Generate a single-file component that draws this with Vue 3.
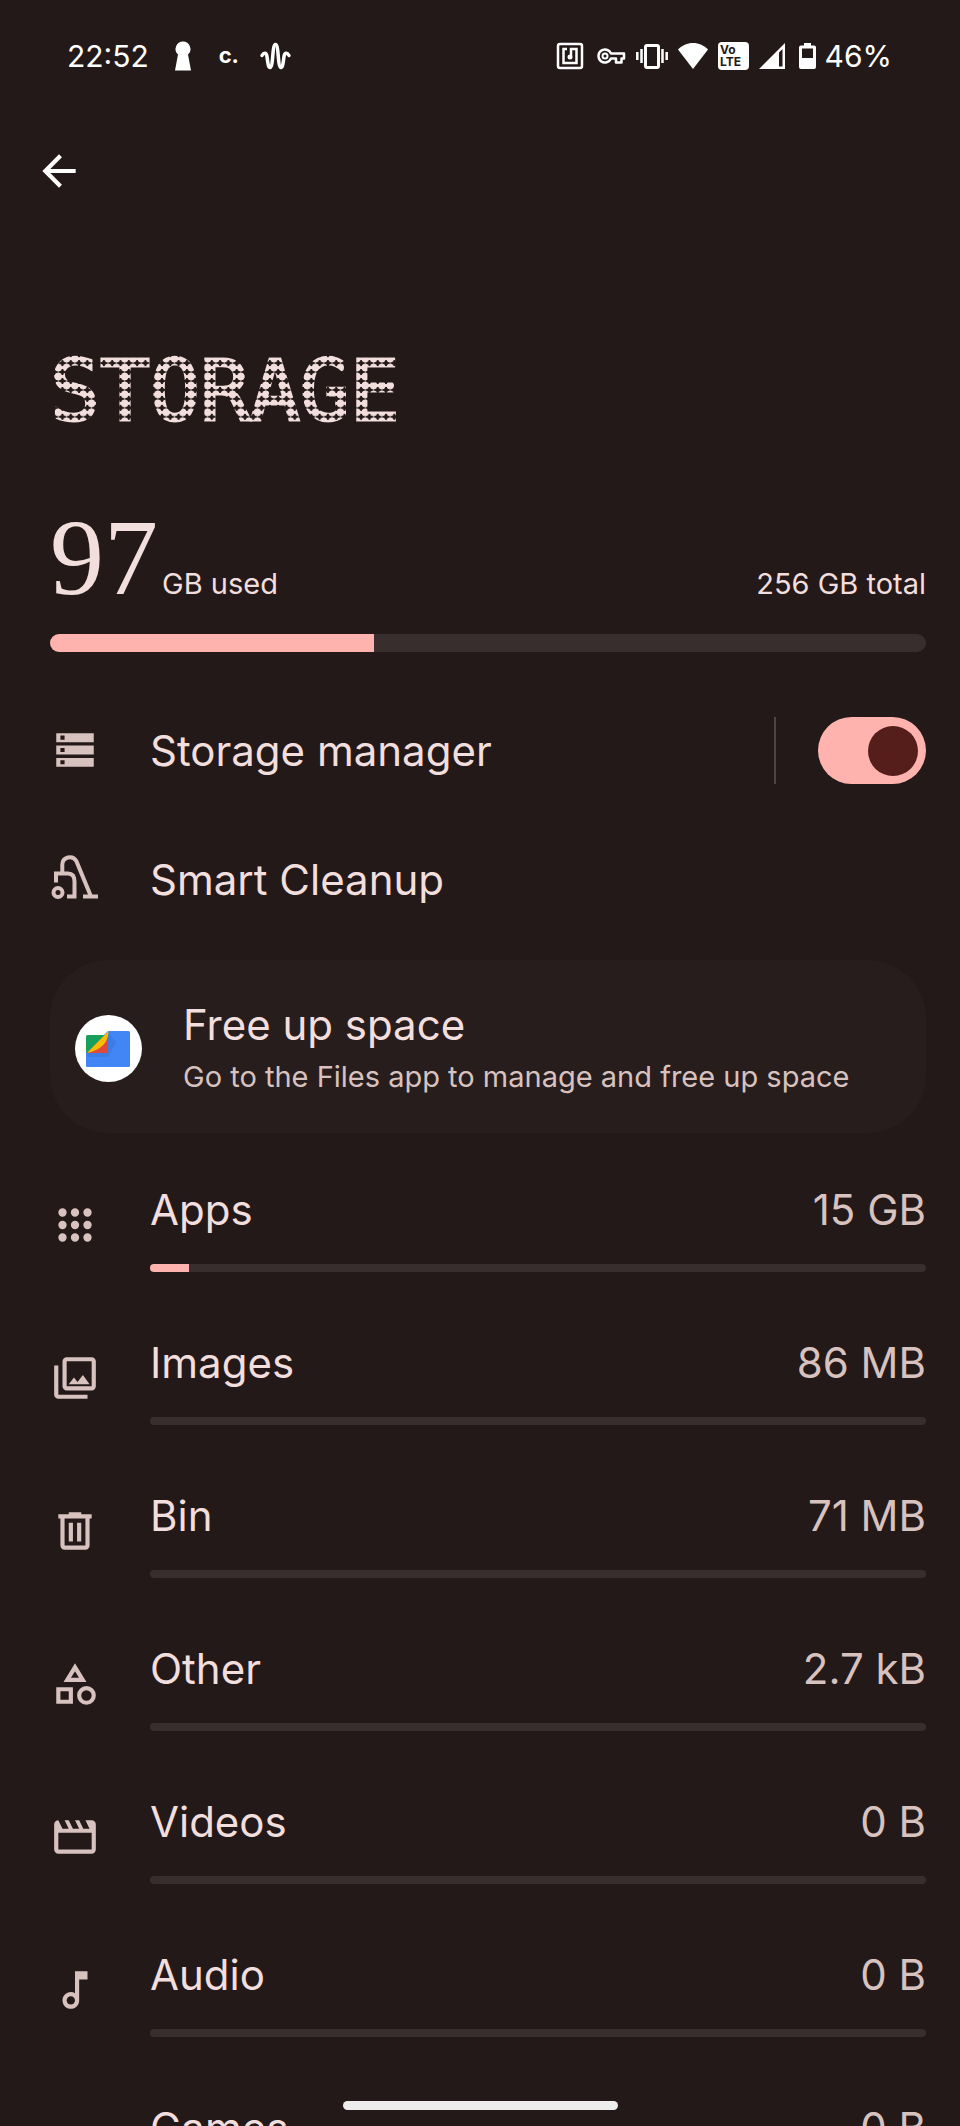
<template>
  <div class="screen">
    <header class="status-bar">
      <div class="status-left">
        <span class="clock">22:52</span>
        <svg class="slot" viewBox="0 0 46 32" aria-hidden="true">
          <path d="M23 1.500a7.500 7.500 0 0 1 5 13l3 16H15l3-16a7.500 7.500 0 0 1 5-13z" />
        </svg>
        <span class="slot c-app">c.</span>
        <svg class="slot" viewBox="0 0 46 32" aria-hidden="true">
          <path class="line" stroke-width="3.500" stroke-linecap="round" d="M10 15.500c2-3.500 4.500-3 5 1 1 8 1.500 11 3 11 3.500 0 2-23 5.500-23s2 23 5.500 23c1.500 0 2-3 3-11 .5-4 3-4.500 5-1" />
        </svg>
      </div>
      <div class="status-right">
        <svg class="status-icon" viewBox="0 0 32 32" aria-hidden="true">
          <rect class="line" x="4" y="4" width="24" height="24" rx="2" stroke-width="2.500" />
          <path class="line" stroke-width="2.500" d="M13 9H9.500v14h13V9H17v7" />
          <circle cx="16" cy="17" r="2.500" />
        </svg>
        <svg class="status-icon" viewBox="0 0 32 32" aria-hidden="true">
          <path class="line" stroke-width="2.500" stroke-linejoin="round" d="M16 13.500h13v5h-2.500v4h-5.500v-4h-5a6.500 6.500 0 1 1 0-5z" />
          <circle class="line" cx="10" cy="16" r="2.500" stroke-width="2" />
        </svg>
        <svg class="status-icon" viewBox="0 0 32 32" aria-hidden="true">
          <rect class="line" x="9.500" y="5.500" width="13" height="22" rx="1.500" stroke-width="3" />
          <path class="line" stroke-width="2.500" d="M5.500 9v14M1.300 12v8M26.500 9v14M30.700 12v8" />
        </svg>
        <svg class="status-icon" viewBox="0 0 32 32" aria-hidden="true">
          <path d="M16 29L1 9.500c4-4 9-6.500 15-6.500s11 2.500 15 6.500z" />
        </svg>
        <svg class="status-icon" viewBox="0 0 32 32" aria-label="VoLTE">
          <rect x="0" y="2" width="31" height="28" rx="4" />
          <text class="volte" x="2" y="14">Vo</text>
          <text class="volte" x="2" y="26">LTE</text>
        </svg>
        <svg class="status-icon signal" viewBox="0 0 26 32" aria-hidden="true">
          <path fill-rule="evenodd" d="M26 3v26H0zM20 12.500V26.500h3.500V9z" />
        </svg>
        <svg class="status-icon battery" viewBox="0 0 22 32" aria-hidden="true">
          <path fill-rule="evenodd" d="M10 3h7v2.500h3a2 2 0 0 1 2 2V27a2 2 0 0 1-2 2H7a2 2 0 0 1-2-2V7.500a2 2 0 0 1 2-2h3zM8 8.500V18h11V8.500z" />
        </svg>
        <span>46%</span>
      </div>
    </header>

    <nav class="toolbar">
      <button class="back" type="button" aria-label="Back">
        <svg class="icon" viewBox="0 0 24 24"><path d="M20 11H7.830l5.590-5.590L12 4l-8 8 8 8 1.410-1.410L7.830 13H20z" /></svg>
      </button>
    </nav>

    <main class="content">
      <h1 class="title">STORAGE</h1>

      <section class="usage">
        <div class="usage-text">
          <p class="used"><span class="amount">97</span>GB used</p>
          <p>256 GB total</p>
        </div>
        <div class="bar bar-large" role="progressbar" aria-label="Storage used" :aria-valuenow="usedPercent">
          <div class="fill" :style="{ width: usedPercent + '%' }"></div>
        </div>
      </section>

      <div class="row">
        <button class="row-link" type="button">
          <svg class="icon" viewBox="0 0 24 24" aria-hidden="true">
            <path fill-rule="evenodd" d="M3 3.500h18v4.300H3zM5 4.600v2h2v-2zM3 9.400h18v4.300H3zM5 10.500v2h2v-2zM3 15.300h18v4.300H3zM5 16.400v2h2v-2z" />
          </svg>
          <span id="manager-label">Storage manager</span>
        </button>
        <div class="switch-area">
          <input v-model="managerOn" class="switch" type="checkbox" role="switch" aria-labelledby="manager-label">
        </div>
      </div>

      <div class="row">
        <button class="row-link" type="button">
          <svg class="icon" viewBox="0 0 50 50" aria-hidden="true">
            <g class="line" stroke-width="4">
              <circle cx="8" cy="37.500" r="4.500" />
              <path d="M6 27.500v-9h12q6.500 0 6.500 8v15H17" />
              <path d="M12.300 18V9.500a7.500 7.500 0 0 1 14-3.500L41 41.500" />
              <path d="M33 41.500h15" />
            </g>
          </svg>
          <span>Smart Cleanup</span>
        </button>
      </div>

      <button class="card" type="button">
        <svg class="files-icon" viewBox="0 0 67 67" aria-hidden="true">
          <circle cx="33.500" cy="33.500" r="33.500" fill="#fff" />
          <path fill="#4285f4" d="M33 16h20.500a1.500 1.500 0 0 1 1.500 1.500v33a1.500 1.500 0 0 1-1.500 1.500h-41a1.500 1.500 0 0 1-1.500-1.500V37z" />
          <path fill="#3b78dc" d="M33 17l8 10-8 15H13l-1-4z" opacity=".7" />
          <path fill="#189f5b" d="M12.500 20H32l-20 18-1-1V21.500a1.500 1.500 0 0 1 1.500-1.500z" />
          <path fill="#db4a3c" d="M33 17v21H12z" />
          <path fill="#fbbc05" d="M33.500 16c0 12-8 19-21.500 22z" />
        </svg>
        <span class="card-text">
          <span>Free up space</span>
          <span class="summary">Go to the Files app to manage and free up space</span>
        </span>
      </button>

      <ul class="categories">
        <li v-for="item in categories" :key="item.name">
          <button class="category" type="button">
            <svg class="icon" viewBox="0 0 24 24" aria-hidden="true">
              <path fill-rule="evenodd" :d="item.icon" />
            </svg>
            <span class="category-body">
              <span class="category-text">
                <span>{{ item.name }}</span>
                <span class="size">{{ item.size }}</span>
              </span>
              <span class="bar">
                <span class="fill" :style="{ width: item.percent + '%' }"></span>
              </span>
            </span>
          </button>
        </li>
      </ul>
    </main>

    <div class="gesture-bar"></div>
  </div>
</template>

<script setup>
import { ref } from 'vue'

const managerOn = ref(true)
const usedPercent = 37

// one dot of the 3x3 apps grid
const dot = (x, y) => `M${x - 2} ${y}a2 2 0 1 0 4 0a2 2 0 1 0-4 0z`
const appsIcon = [6, 12, 18].map(y => [6, 12, 18].map(x => dot(x, y)).join('')).join('')

const categories = [
  { name: 'Apps', size: '15 GB', percent: 5, icon: appsIcon },
  { name: 'Images', size: '86 MB', percent: 0, icon: 'M8 2h12a2 2 0 0 1 2 2v12a2 2 0 0 1-2 2H8a2 2 0 0 1-2-2V4a2 2 0 0 1 2-2zM8 4v12h12V4zM9 15l2.500-3.200 1.700 2.100 2.600-3.400L19 15zM2 6h2v14h14v2H4a2 2 0 0 1-2-2z' },
  { name: 'Bin', size: '71 MB', percent: 0, icon: 'M9 3v1H4v2h1v13a2 2 0 0 0 2 2h10a2 2 0 0 0 2-2V6h1V4h-5V3zM7 6h10v13H7zM9 8h2v9H9zM13 8h2v9h-2z' },
  { name: 'Other', size: '2.7 kB', percent: 0, icon: 'M12 2l-5.500 9h11zM12 5.840L13.930 9h-3.870zM17.500 13a4.500 4.500 0 1 0 0 9a4.500 4.500 0 1 0 0-9zM17.500 15a2.500 2.500 0 1 1 0 5a2.500 2.500 0 1 1 0-5zM3 13.500h8v8H3zM5 15.500v4h4v-4z' },
  { name: 'Videos', size: '0 B', percent: 0, icon: 'M4 4l2 4h3L7 4h2l2 4h3l-2-4h2l2 4h3l-2-4h3a2 2 0 0 1 2 2v12a2 2 0 0 1-2 2H4a2 2 0 0 1-2-2V6a2 2 0 0 1 2-2zM4 10v8h16v-8z' },
  { name: 'Audio', size: '0 B', percent: 0, icon: 'M12 3v10.550c-.59-.34-1.270-.55-2-.55-2.210 0-4 1.790-4 4s1.790 4 4 4 4-1.790 4-4V7h4V3zM10 19c-1.100 0-2-.9-2-2s.9-2 2-2 2 .9 2 2-.9 2-2 2z' },
  { name: 'Games', size: '0 B', percent: 0, icon: 'M7 6h10a5 5 0 0 1 5 5v5a2 2 0 0 1-4 1l-2-2H8l-2 2a2 2 0 0 1-4-1v-5a5 5 0 0 1 5-5z' }
]
</script>

<style>
body {
  margin: 0;
  background: #231918;
}
</style>

<style scoped>
* {
  box-sizing: border-box;
}

.screen {
  height: 100vh;
  overflow: hidden;
  background: #231918;
  color: #f1dedd;
  font-family: Inter, Roboto, sans-serif;
  font-size: 42px;
  line-height: 50px;
}

p, h1, ul {
  margin: 0;
  padding: 0;
}

button {
  padding: 0;
  border: none;
  background: none;
  color: inherit;
  font: inherit;
  text-align: left;
  cursor: pointer;
}

svg {
  flex: none;
  fill: currentColor;
}

.line {
  fill: none;
  stroke: currentColor;
}

.icon {
  display: block;
  width: 50px;
  height: 50px;
}

/* status bar */
.status-bar {
  display: flex;
  justify-content: space-between;
  align-items: center;
  height: 112px;
  padding: 0 68px 0 67px;
  color: #fff;
  font-size: 30px;
}

.status-left,
.status-right {
  display: flex;
  align-items: center;
}

.status-right {
  gap: 9px;
}

.clock {
  margin-right: 11px;
}

.slot {
  width: 46px;
  height: 32px;
}

.c-app {
  font-size: 22px;
  font-weight: 700;
  line-height: 30px;
  text-align: center;
}

.status-icon {
  width: 32px;
  height: 32px;
}

.signal {
  width: 26px;
}

.battery {
  width: 22px;
}

.volte {
  fill: #231918;
  font-size: 12px;
  font-weight: 700;
}

/* top */
.toolbar {
  padding: 34px;
}

.back {
  display: block;
  color: #fff;
}

.content {
  padding: 120px 34px 0 50px;
}

/* dot grid clipped to the letters, six dots per monospace character */
.title {
  height: 84px;
  background: radial-gradient(circle closest-side, #f1dedd 94%, transparent) 0.05em 0.05em / 0.1em 0.108em;
  -webkit-background-clip: text;
  background-clip: text;
  color: transparent;
  font-family: "DejaVu Sans Mono", monospace;
  font-size: 83px;
  font-weight: 400;
  line-height: 84px;
  -webkit-text-stroke: 3px transparent;
}

.usage-text {
  display: flex;
  justify-content: space-between;
  align-items: baseline;
  padding-top: 68px;
  font-size: 29px;
  line-height: 38px;
}

.amount {
  margin-right: 4px;
  font-family: "Liberation Serif", serif;
  font-size: 108px;
  line-height: 112px;
}

.bar {
  display: block;
  height: 8px;
  border-radius: 4px;
  background: #382e2d;
  overflow: hidden;
}

.bar-large {
  height: 18px;
  margin-top: 20px;
  border-radius: 9px;
}

.fill {
  display: block;
  height: 100%;
  background: #ffb3ae;
}

/* rows */
.usage {
  margin-bottom: 34px;
}

.row {
  display: flex;
  align-items: center;
  height: 129px;
}

.row-link {
  display: flex;
  flex: 1;
  align-items: center;
  gap: 50px;
}

.icon {
  color: #d8c2bf;
}

.back .icon {
  color: #fff;
}

.switch-area {
  display: flex;
  padding-left: 42px;
  border-left: 2px solid #534342;
}

.switch {
  display: flex;
  justify-content: flex-start;
  align-items: center;
  width: 108px;
  height: 67px;
  margin: 0;
  padding: 8px;
  border-radius: 34px;
  background: #534342;
  appearance: none;
  cursor: pointer;
}

.switch::before {
  content: "";
  width: 50px;
  height: 50px;
  border-radius: 50%;
  background: #561e1b;
}

.switch:checked {
  justify-content: flex-end;
  background: #ffb3ae;
}

.card {
  display: flex;
  align-items: center;
  gap: 41px;
  width: 100%;
  margin-top: 16px;
  padding: 40px 25px 37px;
  border-radius: 58px;
  background: #271d1d;
}

.files-icon {
  width: 67px;
  height: 67px;
}

.card-text {
  display: flex;
  flex-direction: column;
  gap: 8px;
}

.summary {
  color: #d8c2bf;
  font-size: 29px;
  line-height: 38px;
}

/* categories */
.categories {
  display: flex;
  flex-direction: column;
  gap: 66px;
  margin-top: 52px;
  list-style: none;
}

.category {
  display: flex;
  align-items: flex-start;
  gap: 50px;
  width: 100%;
}

.category .icon {
  margin-top: 15px;
}

.category-body {
  flex: 1;
}

.category-text {
  display: flex;
  justify-content: space-between;
  margin-bottom: 29px;
}

.size {
  color: #d8c2bf;
}

.gesture-bar {
  position: fixed;
  right: 0;
  bottom: 16px;
  left: 0;
  width: 275px;
  height: 9px;
  margin: 0 auto;
  border-radius: 5px;
  background: #ededed;
}
</style>
